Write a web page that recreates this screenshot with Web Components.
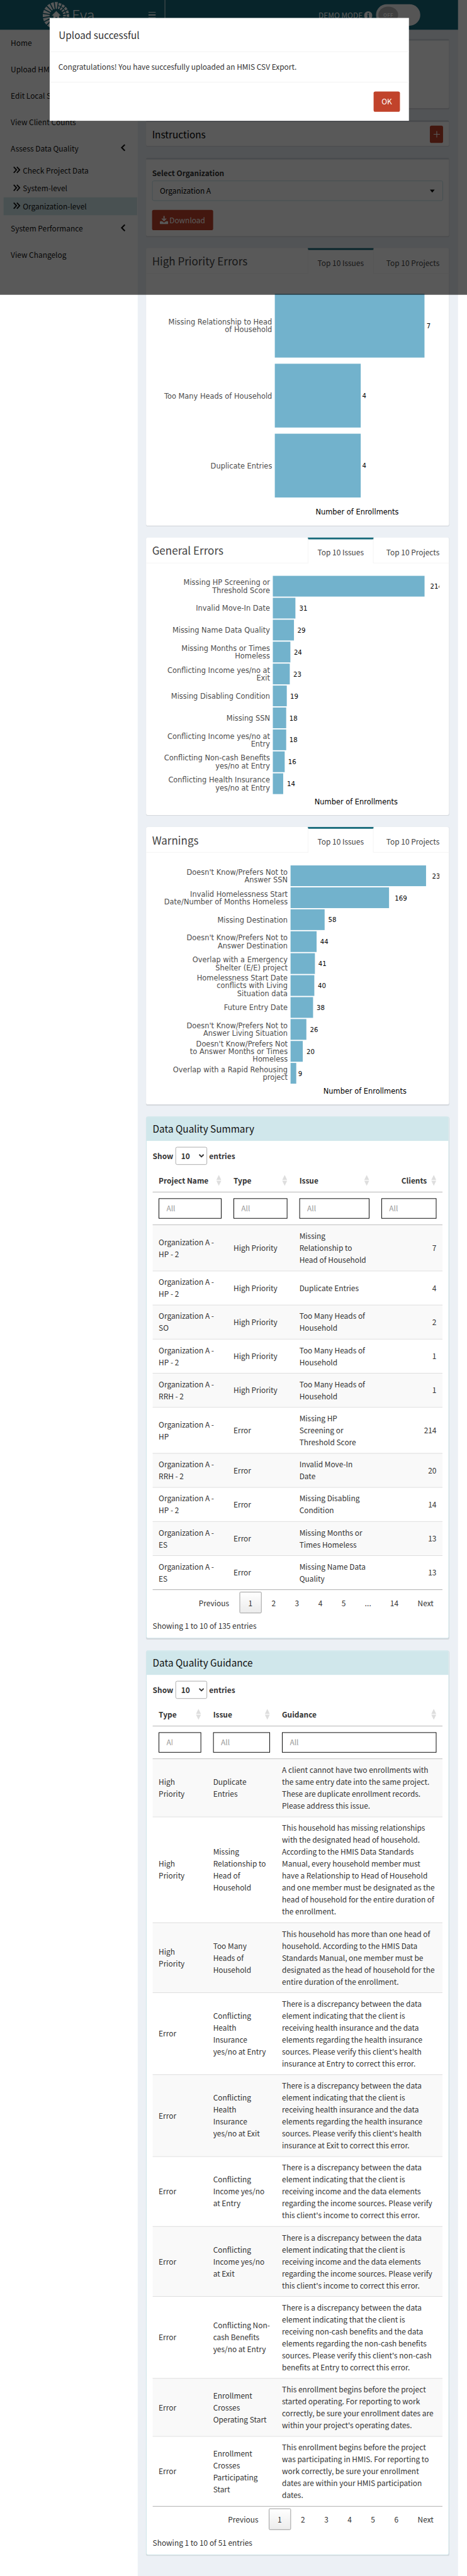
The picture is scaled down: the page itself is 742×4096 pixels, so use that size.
<!DOCTYPE html>
<html lang="en">
<head>
<meta charset="utf-8">
<title>Eva</title>
<style>
html,body{margin:0;padding:0;background:#fff}
body{width:742px;height:4096px;font-family:"Noto Sans CJK SC","Noto Sans",sans-serif;color:#333}
</style>
</head>
<body>
<eva-app></eva-app>
<script>
// Type sizes are expressed in Source Sans units; the CJK family's Latin is 1.117 times larger.
const K = 1.117;
const fs = n => `font-size:${(n / K).toFixed(2)}px`;
const define = (name, render) => customElements.define(name, class extends HTMLElement {
  connectedCallback() {
    if (this.shadowRoot) return;
    this.attachShadow({ mode: 'open' }).innerHTML = `<style>*{box-sizing:border-box}</style>` + render(this);
  }
});

define('sun-logo', () => {
  let rays = '';
  for (let i = 0; i < 20; i++) {
    const a = i * 18 - 90;
    const broken = i > 0 && i < 8;
    const d = broken
      ? 'M11.5-1 16-1.600V1.600L11.500 1ZM17.300-1.900 21.500-2.500V2.500L17.300 1.900Z'
      : 'M11-.9 22.500-2.600V2.600L11 .9Z';
    rays += `<path d="${d}" transform="rotate(${a})"/>`;
  }
  return `<style>:host{display:block;width:46px;height:46px}svg{display:block}</style>
  <svg width="46" height="46" viewBox="-23 -21.5 46 46"><g fill="#fff" transform="translate(0,4.500)">${rays}
  <path d="M0-7.500 7.500 0H4.800V7.500H1.600V2.500H-1.600V7.500H-4.800V0H-7.500Z"/></g></svg>`;
});

define('eva-header', () => `<style>
:host{display:flex;width:765px;height:50px;background:#16697a;color:#fff}
.brand{width:276px;display:flex;border-right:1px solid #eef3f4;padding-left:71px}
.name{margin-left:3px;width:60px;font-weight:300;line-height:50px;${fs(27)}}
.burger{margin:19.5px 0 0 auto;width:12px;height:11px;margin-right:15px;display:flex;flex-direction:column;justify-content:space-between}
.burger i{display:block;height:1.3px;background:#fff}
.right{display:flex;flex:1;padding-left:256px;align-items:flex-start}
.demo{${fs(14)};line-height:20px;margin-top:16px;width:73px;white-space:nowrap}
svg{margin:19px 6px 0 3px;flex:none}
.toggle{width:74px;height:36px;border-radius:18px;background:#f3f3f3;margin-top:7px;padding:4px}
.knob{width:33px;height:28px;border-radius:50%;background:#b4b4b4;text-align:center;line-height:28px;font-weight:700;${fs(9)};letter-spacing:.3px}
</style>
<div class="brand"><sun-logo></sun-logo><span class="name">Eva</span><span class="burger"><i></i><i></i><i></i></span></div>
<div class="right"><span class="demo">DEMO MODE</span>
<svg width="14" height="14" viewBox="0 0 14 14"><circle cx="7" cy="7" r="7" fill="#fff"/><path d="M5.9 2.8h2.3v2H5.9ZM5.2 5.8h3v4h.8v1.3H5V9.800h.9V7.100h-.7Z" fill="#16697a"/></svg>
<div class="toggle"><div class="knob">OFF</div></div></div>`);

define('side-item', el => `<style>
:host{display:flex;height:44px;padding:0 20px 0 18px;box-sizing:border-box;align-items:center;justify-content:space-between;${fs(14)};line-height:20px;color:#111;white-space:nowrap}
:host([sub]){height:30px;margin:0 1px 0 6px;padding-left:16px;justify-content:flex-start;gap:4px}
:host([active]){background:#d0e7eb}
svg{flex:none;margin-top:-3px}
</style>${el.hasAttribute('sub') ? `<svg width="12" height="12" viewBox="0 0 12 12" fill="none" stroke="#111" stroke-width="1.9"><path d="m.9 1 4.600 5L.9 11M6.200 1l4.600 5-4.600 5"/></svg>` : ''}<slot></slot>${el.hasAttribute('more') ? `<svg width="9" height="12" viewBox="0 0 9 12" fill="none" stroke="#111" stroke-width="2.200"><path d="M7.500.8 2.300 6l5.200 5.200"/></svg>` : ''}`);

define('eva-sidebar', () => `<style>:host{display:block;width:230px;flex:none;background:#fff}</style>
<side-item>Home</side-item><side-item>Upload HMIS</side-item><side-item>Edit Local Settings</side-item><side-item>View Client Counts</side-item><side-item more>Assess Data Quality</side-item>
<side-item sub>Check Project Data</side-item><side-item sub>System-level</side-item><side-item sub active>Organization-level</side-item>
<side-item more>System Performance</side-item><side-item>View Changelog</side-item>`);

define('eva-box', () => `<style>
:host{display:block;background:#fff;border-top:3px solid #d2d6de;border-radius:3px;box-shadow:0 1px 1px rgba(0,0,0,.1);padding:0 10px;margin-bottom:20px;box-sizing:border-box}
</style><slot></slot>`);

define('org-picker', () => `<style>
:host{display:block;padding-top:13px;${fs(14)};line-height:20px}
label{display:block;font-weight:700}
.sel{display:flex;align-items:center;justify-content:space-between;height:34px;margin-top:2px;border:1px solid #c3e0e8;border-radius:3px;padding:0 13px 0 12px;color:#000}
.tri{border:4px solid transparent;border-top:5px solid #000;border-bottom:0}
.btn{display:inline-flex;align-items:center;gap:2px;height:34px;margin-top:15px;padding:0 13px;border-radius:3px;background:#c1432b;color:#fff}
</style><label>Select Organization</label><div class="sel"><span>Organization A</span><i class="tri"></i></div>
<div class="btn"><svg width="14" height="14" viewBox="0 0 14 14" fill="#fff"><path d="M6 0h2v5.800h0L10 3.900l1.200 1.200L7 9.200 2.800 5.100 4 3.900 6 5.800ZM1.300 9h2.300L7 11.400 10.400 9h2.300A1.300 1.300 0 0 1 14 10.300v2.400a1.300 1.300 0 0 1-1.300 1.300H1.300A1.300 1.300 0 0 1 0 12.700v-2.400A1.300 1.300 0 0 1 1.300 9Z"/></svg><span>Download</span></div>`);

define('instructions-bar', () => `<style>:host{display:flex;height:40px;align-items:center;justify-content:space-between;color:#000;${fs(18)};line-height:24px}
.p{width:22px;height:29px;border-radius:3px;background:#c1432b;display:flex;align-items:center;justify-content:center}</style>
<span>Instructions</span><span class="p"><svg width="11" height="11" viewBox="0 0 11 11"><path d="M5.500 0v11M0 5.500h11" stroke="#fff" stroke-width="1.200"/></svg></span>`);

// Horizontal bar plots; coordinates share the page's own grid.
const plots = {
  hp: { top: 458, h: 421, left: 459, label: 454.5, axis: 596.5, axisY: 856.7, y0: 491.3, pitch: 117, bar: 106.7, rows: [
    ['Missing Relationship to Head|of Household', 709, 712.5, '7'], ['Too Many Heads of Household', 602.5, 605, '4'], ['Duplicate Entries', 602.5, 605, '4']] },
  ge: { top: 942, h: 421, left: 455.7, label: 451, axis: 594.8, axisY: 1340.7, y0: 963, pitch: 36.7, bar: 34.7, rows: [
    ['Missing HP Screening or|Threshold Score', 709.1, 718.6, '214'], ['Invalid Move-In Date', 493.4, 499.8, '31'], ['Missing Name Data Quality', 491, 496.8, '29'],
    ['Missing Months or Times|Homeless', 485, 490.8, '24'], ['Conflicting Income yes/no at|Exit', 484, 489.8, '23'], ['Missing Disabling Condition', 479, 484.6, '19'],
    ['Missing SSN', 478, 483.3, '18'], ['Conflicting Income yes/no at|Entry', 478, 483.3, '18'], ['Conflicting Non-cash Benefits|yes/no at Entry', 475.5, 481.3, '16'], ['Conflicting Health Insurance|yes/no at Entry', 473, 479.3, '14']] },
  wa: { top: 1426, h: 421, left: 485.3, label: 480.5, axis: 609.5, axisY: 1824.7, y0: 1447.3, pitch: 36.7, bar: 34.7, rows: [
    ["Doesn't Know/Prefers Not to|Answer SSN", 711.6, 721.6, '233'], ['Invalid Homelessness Start|Date/Number of Months Homeless', 649.8, 659.4, '169'], ['Missing Destination', 542.2, 548.3, '58'],
    ["Doesn't Know/Prefers Not to|Answer Destination", 528.8, 534.8, '44'], ['Overlap with a Emergency|Shelter (E/E) project', 526, 531.7, '41'], ['Homelessness Start Date|conflicts with Living|Situation data', 525, 531, '40'],
    ['Future Entry Date', 522.9, 528.8, '38'], ["Doesn't Know/Prefers Not to|Answer Living Situation", 511.7, 517.7, '26'], ["Doesn't Know/Prefers Not|to Answer Months or Times|Homeless", 505.7, 512, '20'], ['Overlap with a Rapid Rehousing|project', 494.8, 498, '9']] }
};
define('bar-plot', el => {
  const p = plots[el.getAttribute('data')];
  let s = '';
  p.rows.forEach(([label, right, vx, v], i) => {
    const y = p.y0 + i * p.pitch, c = y + p.bar / 2, L = label.split('|');
    s += `<rect x="${p.left}" y="${y.toFixed(1)}" width="${(right - p.left).toFixed(1)}" height="${p.bar}" fill="#72b2cc"/>`;
    L.forEach((t, j) => s += `<text class="l" x="${p.label}" y="${(c + 4.600 + (j - (L.length - 1) / 2) * 12.8).toFixed(1)}">${t}</text>`);
    s += `<text class="v" x="${vx}" y="${(c + 4.300).toFixed(1)}">${v}</text>`;
  });
  return `<style>:host{display:block}svg{display:block}text{font:12px "DejaVu Sans",sans-serif}
  .l{text-anchor:end;fill:#4d4d4d}.v{font-size:10.7px;fill:#000}.a{text-anchor:middle;fill:#000}</style>
  <svg width="490" height="${p.h}" viewBox="244 ${p.top} 490 ${p.h}">${s}<text class="a" x="${p.axis}" y="${p.axisY + 4}">Number of Enrollments</text></svg>`;
});

define('tab-box', el => `<style>
:host{display:block;height:464px;background:#fff;border-radius:3px;box-shadow:0 1px 1px rgba(0,0,0,.1);margin-bottom:20px;color:#444}
.bar{display:flex;height:43px}
.t,.o{border-bottom:1px solid #f4f4f4}
.t{width:270px;padding-left:10px;${fs(20)};line-height:42px}
.a{width:110px;border:1px solid #f4f4f4;border-top:3px solid #16697a;border-bottom:0;text-align:center;${fs(14)};line-height:44px}
.o{flex:1;padding-right:16px;text-align:right;${fs(14)};line-height:50px}
</style><div class="bar"><div class="t">${el.getAttribute('heading')}</div><div class="a">Top 10 Issues</div><div class="o">Top 10 Projects</div></div><slot></slot>`);

const oa = 'Organization A -<br>', disc = 'There is a discrepancy between the data<br>element indicating that the client is<br>';
const hl = at => disc + `receiving health insurance and the data<br>elements regarding the health insurance<br>sources. Please verify this client's health<br>insurance at ${at} to correct this error.`;
const inc = disc + `receiving income and the data elements<br>regarding the income sources. Please verify<br>this client's income to correct this error.`;
const HPr = 'High<br>Priority', TM = 'Too Many Heads of<br>Household';
const tables = {
  summary: { title: 'Data Quality Summary', cols: [['Project Name', 125], ['Type', 110], ['Issue', 137], ['Clients', 112]], num: true,
    pages: ['Previous', '1', '2', '3', '4', '5', '…', '14', 'Next'], info: 'Showing 1 to 10 of 135 entries', rows: [
    [oa + 'HP - 2', 'High Priority', 'Missing<br>Relationship to<br>Head of Household', '7', 3], [oa + 'HP - 2', 'High Priority', 'Duplicate Entries', '4', 2],
    [oa + 'SO', 'High Priority', TM, '2', 2], [oa + 'HP - 2', 'High Priority', TM, '1', 2], [oa + 'RRH - 2', 'High Priority', TM, '1', 2],
    [oa + 'HP', 'Error', 'Missing HP<br>Screening or<br>Threshold Score', '214', 3], [oa + 'RRH - 2', 'Error', 'Invalid Move-In<br>Date', '20', 2],
    [oa + 'HP - 2', 'Error', 'Missing Disabling<br>Condition', '14', 2], [oa + 'ES', 'Error', 'Missing Months or<br>Times Homeless', '13', 2], [oa + 'ES', 'Error', 'Missing Name Data<br>Quality', '13', 2]] },
  guidance: { title: 'Data Quality Guidance', cols: [['Type', 91], ['Issue', 115], ['Guidance', 278]],
    pages: ['Previous', '1', '2', '3', '4', '5', '6', 'Next'], info: 'Showing 1 to 10 of 51 entries', rows: [
    [HPr, 'Duplicate<br>Entries', 'A client cannot have two enrollments with<br>the same entry date into the same project.<br>These are duplicate enrollment records.<br>Please address this issue.', 4],
    [HPr, 'Missing<br>Relationship to<br>Head of<br>Household', 'This household has missing relationships<br>with the designated head of household.<br>According to the HMIS Data Standards<br>Manual, every household member must<br>have a Relationship to Head of Household<br>and one member must be designated as the<br>head of household for the entire duration of<br>the enrollment.', 8],
    [HPr, 'Too Many<br>Heads of<br>Household', 'This household has more than one head of<br>household. According to the HMIS Data<br>Standards Manual, one member must be<br>designated as the head of household for the<br>entire duration of the enrollment.', 5],
    ['Error', 'Conflicting<br>Health<br>Insurance<br>yes/no at Entry', hl('Entry'), 6], ['Error', 'Conflicting<br>Health<br>Insurance<br>yes/no at Exit', hl('Exit'), 6],
    ['Error', 'Conflicting<br>Income yes/no<br>at Entry', inc, 5], ['Error', 'Conflicting<br>Income yes/no<br>at Exit', inc, 5],
    ['Error', 'Conflicting Non-<br>cash Benefits<br>yes/no at Entry', disc + `receiving non-cash benefits and the data<br>elements regarding the non-cash benefits<br>sources. Please verify this client's non-cash<br>benefits at Entry to correct this error.`, 6],
    ['Error', 'Enrollment<br>Crosses<br>Operating Start', `This enrollment begins before the project<br>started operating. For reporting to work<br>correctly, be sure your enrollment dates are<br>within your project's operating dates.`, 4],
    ['Error', 'Enrollment<br>Crosses<br>Participating<br>Start', 'This enrollment begins before the project<br>was participating in HMIS. For reporting to<br>work correctly, be sure your enrollment<br>dates are within your HMIS participation<br>dates.', 5]] }
};
define('table-pager', el => `<style>
:host{display:flex;justify-content:flex-end;gap:2px;height:36px;margin-top:3px;${fs(14)};line-height:20px;color:#333}
span{padding:0 14px;border:1px solid transparent;border-radius:2px;line-height:35px;height:36px;min-width:37px;text-align:center}
span:first-child{color:#666}
span.on{border-color:#979797;background:linear-gradient(#fff,#ececec)}
span.gap{width:40px;padding:0;font-family:"Open Sans","Noto Sans",sans-serif;font-size:14px}
</style>${el.getAttribute('pages').split(',').map(p => `<span class="${p === '1' ? 'on' : p === '…' ? 'gap' : ''}">${p}</span>`).join('')}`);

define('data-box', el => {
  const t = tables[el.getAttribute('data')], g = t.cols.map(c => c[1] + 'px').join(' ');
  const sort = '<svg width="9" height="18" viewBox="0 0 9 18" fill="#dedede"><path d="M4.500 0 8.600 8.300H.4ZM4.500 18 8.600 9.600H.4Z"/></svg>';
  return `<style>
:host{display:block;box-sizing:border-box;height:873px;border:1px solid #d0e7eb;border-radius:3px;background:#fff;box-shadow:0 1px 1px rgba(0,0,0,.1);margin-bottom:20px;${fs(14)};line-height:20px;color:#333}
:host([data=guidance]){height:1513px;margin-bottom:0}
h3{margin:0;height:40px;background:#d0e7eb;padding-left:10px;font-weight:400;color:#111;${fs(18)};line-height:39px}
.show{display:flex;align-items:center;margin:10px 10px 0;height:30px;font-weight:700}
.sel{width:53px;height:30px;border:1px solid #aaa;border-radius:3px;margin:0 3px 0 4px;padding:0 4px 0 8px;display:flex;align-items:center;justify-content:space-between}
.tb{margin:10px 10px 0;width:484px;white-space:nowrap}
.r{display:grid;grid-template-columns:${g};align-items:center}
.r>div{padding:0 10px}
.hd{height:36px;padding-bottom:4px;border-bottom:1px solid #b1b1b1;font-weight:700}
.hd>div{display:flex;align-items:center;justify-content:space-between}
.hd.n>div:last-child{justify-content:flex-end;gap:7px}
.fl{height:55px;border-bottom:1px solid #b1b1b1}
.in{height:34px;border:1px solid #000;padding:0 12px;line-height:32px;color:#999}
.in span{display:block;overflow:hidden;width:calc(100% - 35px)}
.b:nth-child(odd){background:#f9f9f9}
.b{border-top:1px solid #ddd}
.b:first-child{border-top:0}
.bd{border-bottom:1px solid #aaa}
.n.b>div:last-child{text-align:right}
.info{margin:11px 10px 0}
</style><h3>${t.title}</h3>
<div class="show">Show<div class="sel"><span>10</span><svg width="9" height="6" viewBox="0 0 9 6" fill="none" stroke="#333" stroke-width="2"><path d="m.8.8 3.700 3.700L8.200.8"/></svg></div>entries</div>
<div class="tb"><div class="r hd ${t.num ? 'n' : ''}">${t.cols.map(c => `<div><span>${c[0]}</span>${sort}</div>`).join('')}</div>
<div class="r fl">${t.cols.map(() => `<div><div class="in"><span>All</span></div></div>`).join('')}</div>
<div class="bd">${t.rows.map((r, i) => `<div class="r b ${t.num ? 'n' : ''}" style="height:${r[r.length - 1] * 20 + 16 + (i ? 1 : 0)}px">${r.slice(0, -1).map(c => `<div>${c}</div>`).join('')}</div>`).join('')}</div>
<table-pager pages="${t.pages.join(',')}"></table-pager></div><div class="info">${t.info}</div>`;
});

define('upload-modal', () => `<style>
:host{display:block;position:absolute;left:0;top:0;width:780px;height:493px;background:rgba(0,0,0,.65)}
.m{width:600px;height:172px;margin:30px 0 0 83px;background:#fff;color:#333;display:flex;flex-direction:column}
.h{height:57px;border-bottom:1px solid #f1f1f1;padding-left:15px;${fs(18)};line-height:56px}
.c{height:51px;border-bottom:1px solid #f1f1f1;padding-left:14.500px;${fs(14)};line-height:50px}
.f{display:flex;justify-content:flex-end;padding:15px 15px 0}
.ok{width:44px;height:34px;border-radius:3px;background:#c1432b;color:#fff;text-align:center;${fs(14)};line-height:34px}
</style><div class="m"><div class="h">Upload successful</div><div class="c">Congratulations! You have succesfully uploaded an HMIS CSV Export.</div><div class="f"><div class="ok">OK</div></div></div>`);

define('eva-app', () => `<style>
:host{display:block;width:742px;height:4096px;overflow:clip;contain:paint}
.page{position:relative;width:780px;height:4308px;transform:scale(.95128,.95079);transform-origin:0 0}
.body{display:flex;height:4258px;width:765px}
main{flex:1;min-width:0;background:#ecf0f5;padding:15px 15px 0 14px}
</style><div class="page"><eva-header></eva-header>
<div class="body"><eva-sidebar></eva-sidebar><main>
<eva-box style="height:116px"></eva-box>
<eva-box style="height:43px"><instructions-bar></instructions-bar></eva-box>
<eva-box style="height:131px"><org-picker></org-picker></eva-box>
<tab-box heading="High Priority Errors"><bar-plot data="hp"></bar-plot></tab-box>
<tab-box heading="General Errors"><bar-plot data="ge"></bar-plot></tab-box>
<tab-box heading="Warnings"><bar-plot data="wa"></bar-plot></tab-box>
<data-box data="summary"></data-box><data-box data="guidance"></data-box>
</main></div><upload-modal></upload-modal></div>`);
</script>
</body>
</html>
